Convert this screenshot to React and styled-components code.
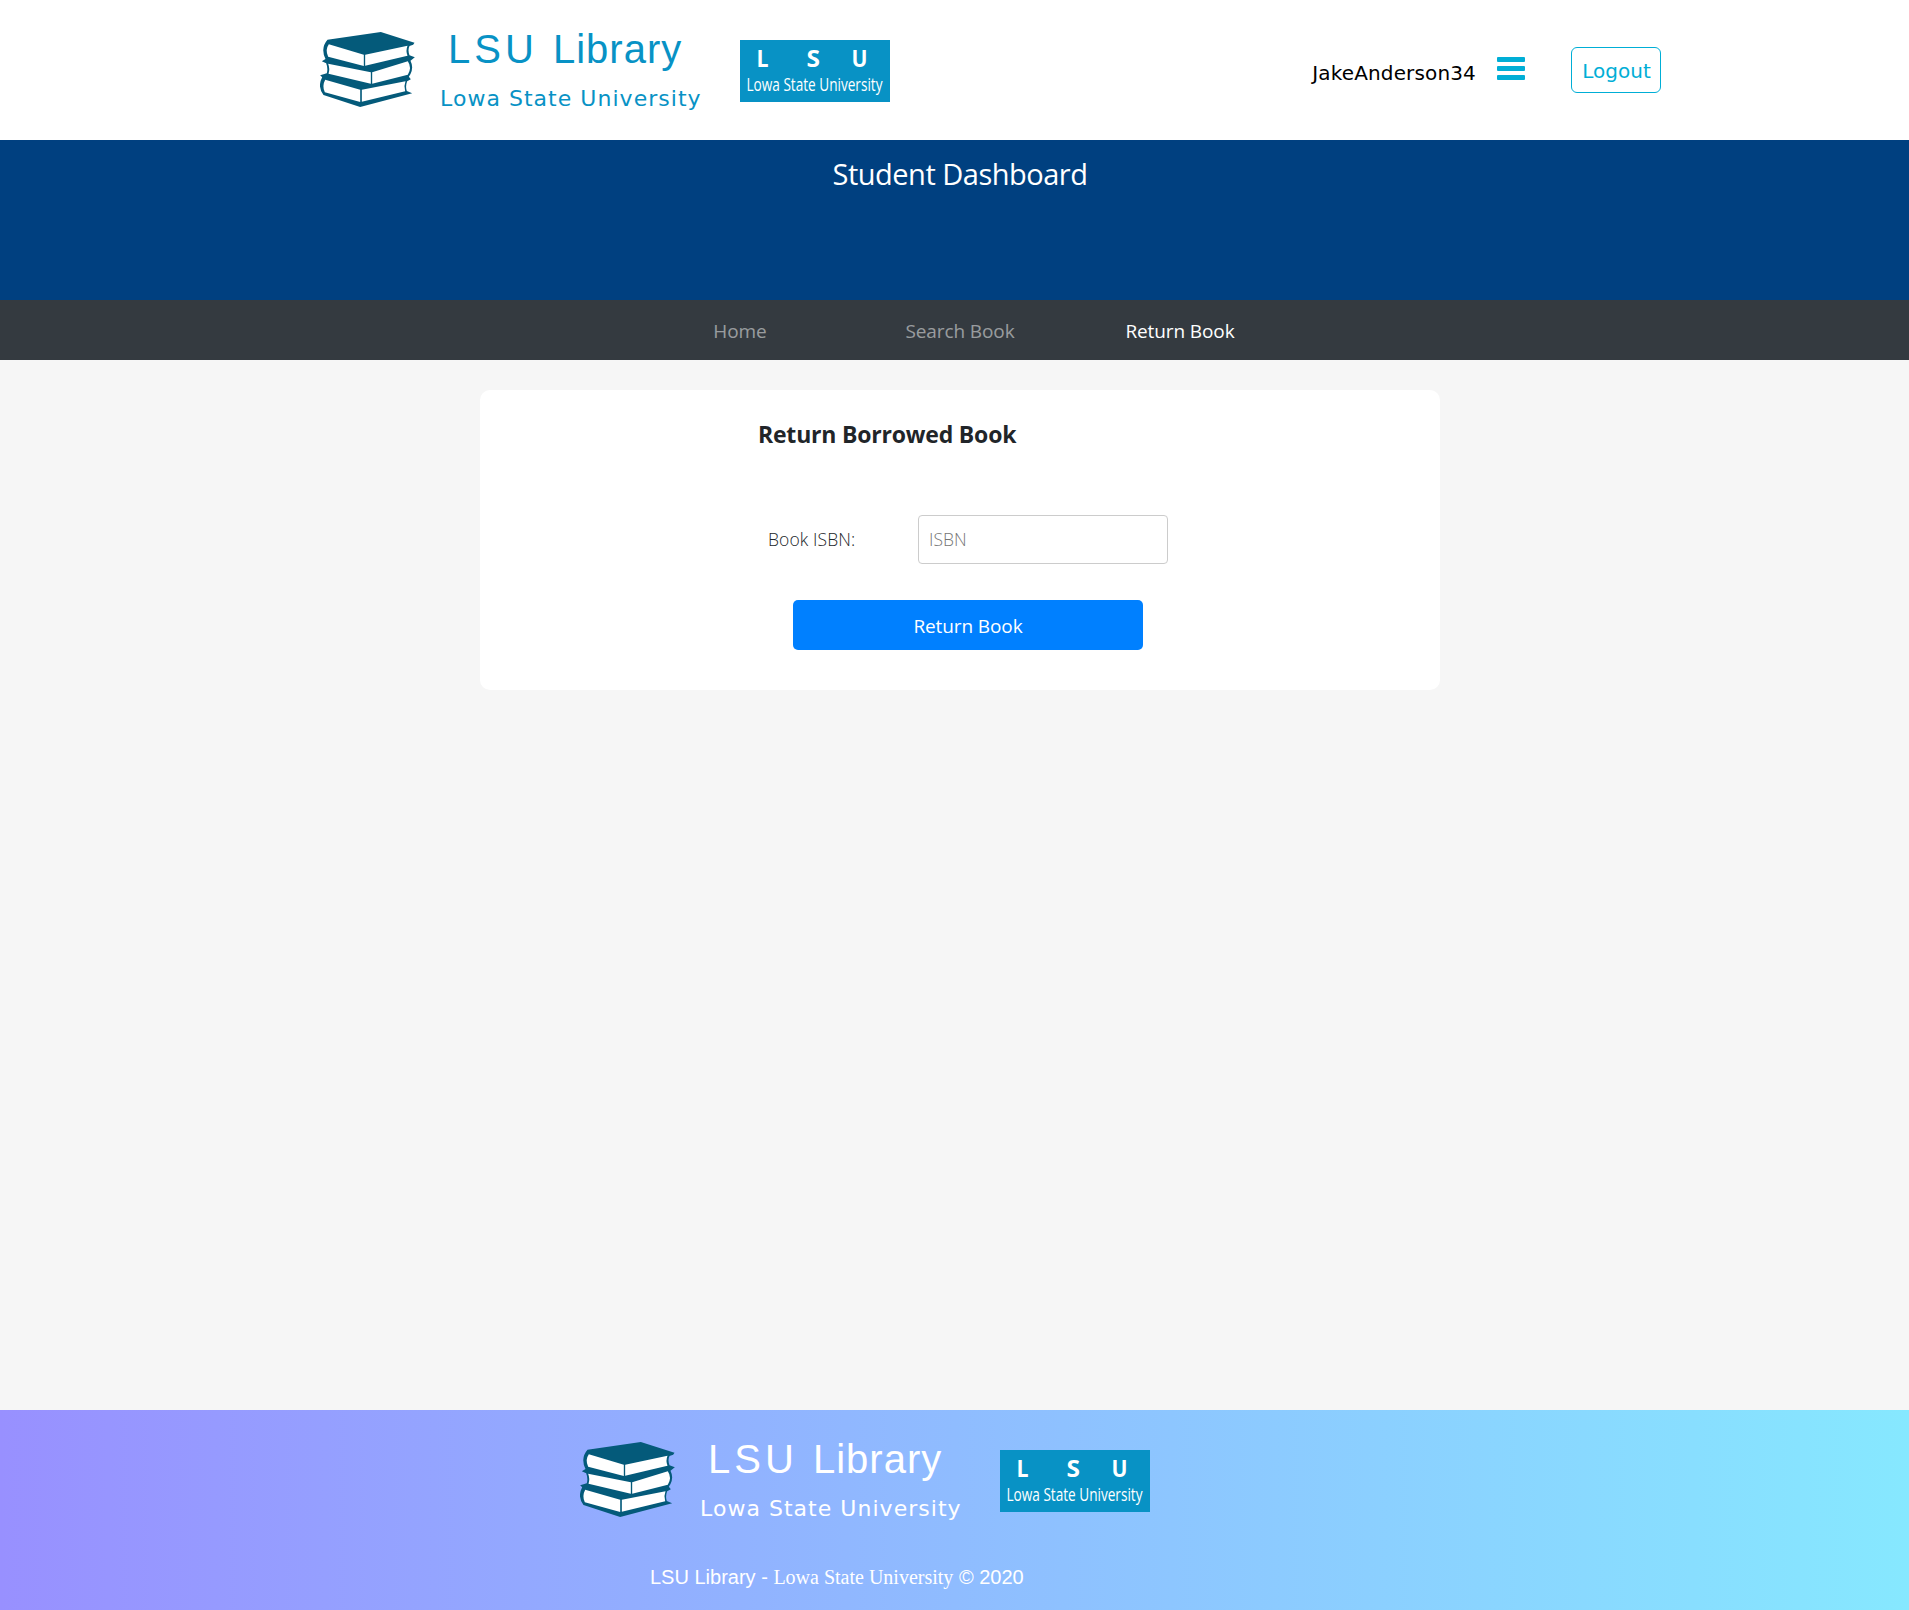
import React from "react";
import styled, { createGlobalStyle } from "styled-components";

const segoe = '"Segoe UI", "Open Sans", "Noto Sans", sans-serif';
const verdana = 'Verdana, "DejaVu Sans", sans-serif';
const arial = 'Arial, "Liberation Sans", sans-serif';

const GlobalStyle = createGlobalStyle`
  *, *::before, *::after { box-sizing: border-box; }
  body {
    margin: 0;
    background: #f6f6f6;
    color: #212529;
    font-family: ${segoe};
  }
`;

const Page = styled.div`
  display: flex;
  flex-direction: column;
  min-height: 1610px;
`;

const Header = styled.header`
  display: flex;
  justify-content: space-between;
  height: 140px;
  padding: 0 248px 0 320px;
  background: #fff;
`;

const BrandRow = styled.div`
  display: flex;
  align-items: flex-start;
  height: 140px;
`;

const BooksSvg = styled.svg`
  flex: none;
  width: 95px;
  height: 75px;
  margin-top: 32px;
`;

const BrandText = styled.div`
  width: 300px;
  padding: 26px 0 0 25px;
  color: ${(p) => p.$color};
`;

const BrandTitle = styled.div`
  padding-left: 8px;
  font: 40px/46px ${arial};
  letter-spacing: 1px;
  white-space: pre;
`;

const Wide = styled.span`
  letter-spacing: 4px;
`;

const BrandSubtitle = styled.div`
  margin-top: 12px;
  font: 22px/30px ${verdana};
  letter-spacing: 1.03px;
  white-space: nowrap;
`;

const BadgeSvg = styled.svg`
  flex: none;
  width: 150px;
  height: 62px;
  margin: 40px 0 0 25px;
  overflow: visible;
`;

const UserArea = styled.div`
  display: flex;
  align-items: flex-start;
`;

const UserName = styled.span`
  margin: 59px 21px 0 0;
  color: #000;
  font: 20px/28px ${verdana};
  letter-spacing: 0.15px;
`;

const MenuButton = styled.button`
  display: grid;
  gap: 4px;
  width: 28px;
  margin: 57px 46px 0 0;
  padding: 0;
  border: 0;
  background: none;
`;

const MenuBar = styled.span`
  height: 5px;
  border-radius: 1px;
  background: #00aed6;
`;

const LogoutButton = styled.button`
  width: 90px;
  height: 46px;
  margin-top: 47px;
  padding: 1px 0 0 1px;
  border: 1px solid #00aed6;
  border-radius: 6px;
  background: #fff;
  color: #00aed6;
  font: 20px/28px ${verdana};
`;

const Banner = styled.section`
  height: 160px;
  padding: 13px 0 0 11px;
  background: #004080;
  color: #fff;
  font-size: 29px;
  line-height: 42px;
  letter-spacing: -0.5px;
  text-align: center;
`;

const Nav = styled.nav`
  display: flex;
  gap: 110px;
  height: 60px;
  padding-left: 685px;
  background: #343a40;
`;

const NavLink = styled.a`
  width: 110px;
  color: ${(p) => (p.$active ? "#fff" : "rgba(255, 255, 255, 0.5)")};
  font-size: 19px;
  line-height: 62px;
  letter-spacing: -0.1px;
  text-align: center;
  text-decoration: none;
  white-space: nowrap;
`;

const Main = styled.main`
  flex: 1;
  padding-top: 30px;
`;

const Card = styled.form`
  width: 960px;
  height: 300px;
  margin: 0 auto 0 480px;
  padding: 29px 0 0 278px;
  border-radius: 10px;
  background: #fff;
`;

const CardTitle = styled.h1`
  margin: 0 0 65px;
  font-size: 23px;
  font-weight: 700;
  line-height: 31px;
  letter-spacing: -0.2px;
`;

const Field = styled.div`
  display: flex;
  align-items: center;
  height: 49px;
  padding-left: 10px;
`;

const Label = styled.label`
  width: 150px;
  padding-bottom: 2px;
  font-size: 17.5px;
  font-weight: 350;
  letter-spacing: 0.1px;
`;

const Input = styled.input`
  width: 250px;
  height: 49px;
  padding: 0 10px 2px;
  border: 1px solid #ccc;
  border-radius: 4px;
  outline: 0;
  font: 350 17.5px ${segoe};
  &::placeholder {
    color: #757575;
    opacity: 1;
  }
`;

const SubmitButton = styled.button`
  display: block;
  width: 350px;
  height: 50px;
  margin: 36px 0 0 35px;
  padding: 1px 0 0;
  border: 0;
  border-radius: 5px;
  background: #0080ff;
  color: #fff;
  font: 19px/50px ${segoe};
  letter-spacing: -0.1px;
`;

const Footer = styled.footer`
  height: 200px;
  padding-left: 580px;
  background: linear-gradient(to right, #9890ff, #86e8ff);
`;

const Copyright = styled.div`
  margin-top: 15px;
  padding-left: 70px;
  color: #fff;
  font: 20px/24px ${arial};
`;

const Serif = styled.span`
  font-family: "Times New Roman", "Liberation Serif", serif;
`;

function Books() {
  return (
    <BooksSvg viewBox="29.5 36 285 225" preserveAspectRatio="none">
      <path
        fill="#045a7a"
        d="M52 59 L212 36 L313 68 L309 74 L298 78 Q292 90 298 106 L314 112 L301 122 Q311 142 301 162 L296 170 L302 178 L291 184 Q285 200 290 213 L306 220 L150 261 L40 225 Q21 200 36 172 L30 166 L50 160 Q54 145 48 130 L35 124 L46 117 Q30 84 52 59Z"
      />
      <g fill="#fff">
        <path d="M56 73 L161 104 L161 138 L54 110 Q44 90 56 73Z" />
        <path d="M165 104 L292 77 Q286 92 292 107 L165 137Z" />
        <path d="M54 131 L182 157 L182 191 L55 161 Q60 147 54 131Z" />
        <path d="M186 157 L293 124 Q306 143 293 164 L186 191Z" />
        <path d="M45 179 L150 209 L150 246 L44 217 Q35 198 45 179Z" />
        <path d="M155 209 L286 184 Q280 199 285 214 L155 245Z" />
      </g>
    </BooksSvg>
  );
}

function Badge() {
  return (
    <BadgeSvg viewBox="0 0 150 62">
      <rect width="150" height="62" fill="#0892c5" />
      <g fill="#fff" fontFamily="'Open Sans', sans-serif">
        <g fontSize="23" fontWeight="700">
          <text x="16.5" y="26.5" textLength="12" lengthAdjust="spacingAndGlyphs">L</text>
          <text x="66.5" y="26.5" textLength="13.5" lengthAdjust="spacingAndGlyphs">S</text>
          <text x="111.5" y="26.5" textLength="16" lengthAdjust="spacingAndGlyphs">U</text>
        </g>
        <text x="6.5" y="50.5" fontSize="17.5" fontWeight="500" textLength="136" lengthAdjust="spacingAndGlyphs">Lowa State University</text>
      </g>
    </BadgeSvg>
  );
}

function Brand({ color }) {
  return (
    <BrandRow>
      <Books />
      <BrandText $color={color}>
        <BrandTitle>
          <Wide>LSU </Wide>Library
        </BrandTitle>
        <BrandSubtitle>Lowa State University</BrandSubtitle>
      </BrandText>
      <Badge />
    </BrandRow>
  );
}

export default function App() {
  return (
    <Page>
      <GlobalStyle />
      <Header>
        <Brand color="#0892c5" />
        <UserArea>
          <UserName>JakeAnderson34</UserName>
          <MenuButton type="button" aria-label="Menu">
            <MenuBar />
            <MenuBar />
            <MenuBar />
          </MenuButton>
          <LogoutButton type="button">Logout</LogoutButton>
        </UserArea>
      </Header>
      <Banner>Student Dashboard</Banner>
      <Nav>
        <NavLink>Home</NavLink>
        <NavLink>Search Book</NavLink>
        <NavLink $active>Return Book</NavLink>
      </Nav>
      <Main>
        <Card>
          <CardTitle>Return Borrowed Book</CardTitle>
          <Field>
            <Label htmlFor="isbn">Book ISBN:</Label>
            <Input id="isbn" placeholder="ISBN" />
          </Field>
          <SubmitButton type="button">Return Book</SubmitButton>
        </Card>
      </Main>
      <Footer>
        <Brand color="#fff" />
        <Copyright>
          LSU Library - <Serif>Lowa State University</Serif> © 2020
        </Copyright>
      </Footer>
    </Page>
  );
}
